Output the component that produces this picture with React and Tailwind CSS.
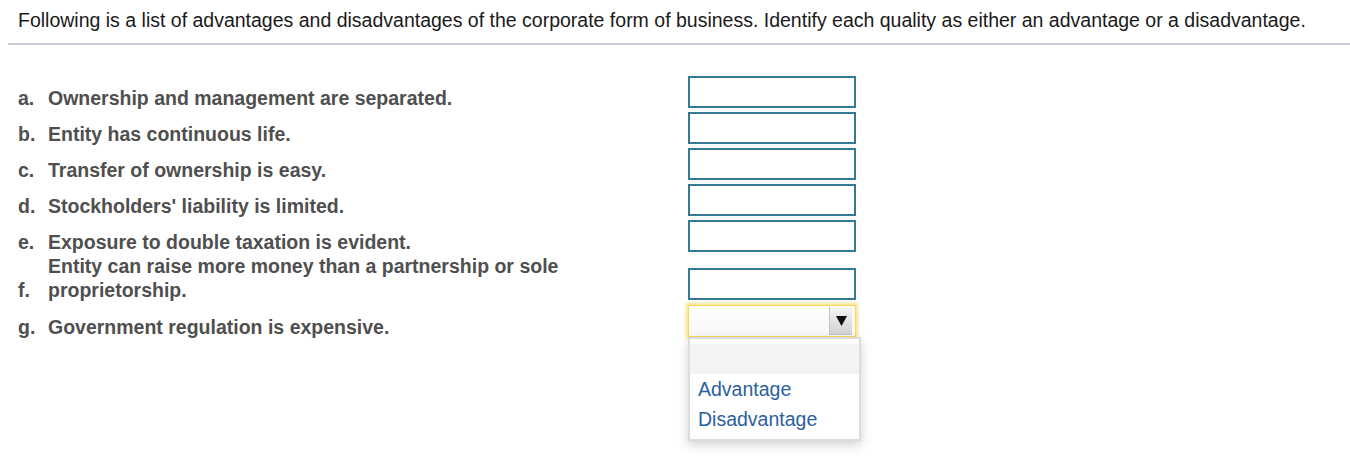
import React from 'react'

const items = [
  { key: 'a', text: 'Ownership and management are separated.' },
  { key: 'b', text: 'Entity has continuous life.' },
  { key: 'c', text: 'Transfer of ownership is easy.' },
  { key: 'd', text: "Stockholders' liability is limited." },
  { key: 'e', text: 'Exposure to double taxation is evident.' },
  { key: 'f', text: 'Entity can raise more money than a partnership or sole proprietorship.', tall: true },
]

function Label({ k, text }) {
  return (
    <div className="flex items-end w-[670px] -mb-[2px] leading-6 text-[19.5px] font-bold text-[#4f4f4f]">
      <span className="w-[30px] shrink-0">{k}.</span>
      <span className="w-[530px]">{text}</span>
    </div>
  )
}

export default function App() {
  return (
    <div className="w-[1350px] h-[462px] bg-white font-['Liberation_Sans',Arial,sans-serif] overflow-hidden">
      <div className="pl-[18px] pt-[8px] h-[43px] text-[19.5px] leading-6 text-[#1a1a1a] whitespace-nowrap">
        Following is a list of advantages and disadvantages of the corporate form of business. Identify each quality as either an advantage or a disadvantage.
      </div>
      <div className="ml-[8px] h-[2px] bg-[#cacdd8]" />

      <div className="pl-[18px] pt-[31px] flex flex-col">
        {items.map((it, i) => (
          <div
            key={it.key}
            className={`flex items-end ${it.tall ? 'h-12' : 'h-8'} ${i > 0 && !it.tall ? 'mt-1' : ''}`}
          >
            <Label k={it.key} text={it.text} />
            <div className="w-[168px] h-8 border-2 border-[#357894] bg-white" />
          </div>
        ))}

        <div className="flex items-end h-8 mt-[5px]">
          <Label k="g" text="Government regulation is expensive." />
          <div className="relative w-[168px] h-8">
            <div className="w-full h-full border border-[#f5d65e] shadow-[0_0_3px_2px_#fbe28a] bg-gradient-to-b from-white to-[#f8f8f8] flex justify-end items-center pr-[3px]">
              <div className="w-[23px] h-[28px] bg-gradient-to-b from-[#f6f6f6] to-[#d2d2d2] border-l border-b border-[#c4c4c4] flex items-center justify-center">
                <svg width="11" height="10" viewBox="0 0 11 10">
                  <path d="M0 0 H11 L5.5 10 Z" fill="#111" />
                </svg>
              </div>
            </div>
            <div className="absolute left-0 top-[32px] w-[173px] h-[104px] bg-white border-2 border-[#dcdcdc] shadow-[0_4px_10px_rgba(0,0,0,0.18)] pt-[5px] z-10">
              <div className="h-[30px] bg-[#f3f3f3]" />
              <div className="pl-[8px] h-[30px] leading-[30px] text-[19.5px] text-[#2b60a0]">Advantage</div>
              <div className="pl-[8px] h-[30px] leading-[30px] text-[19.5px] text-[#2b60a0]">Disadvantage</div>
            </div>
          </div>
        </div>
      </div>
    </div>
  )
}
